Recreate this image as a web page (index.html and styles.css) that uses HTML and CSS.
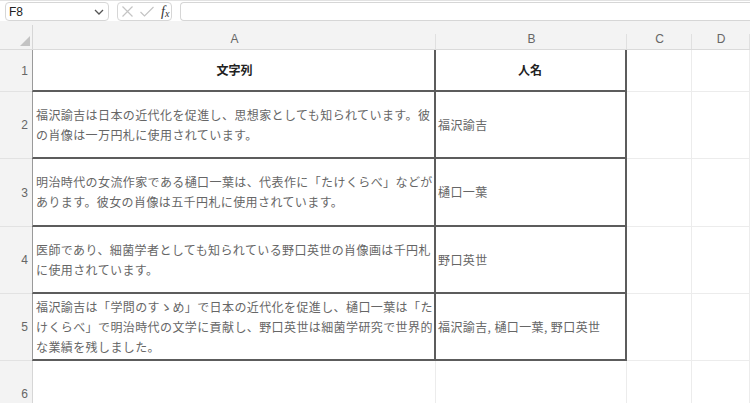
FILE: index.html
```html
<!DOCTYPE html>
<html lang="ja">
<head>
<meta charset="utf-8">
<link rel="stylesheet" href="styles.css">
</head>
<body>
<div class="app">
  <div class="toolbar">
    <div class="namebox"><span class="nb-text">F8</span>
      <svg class="chev" width="10" height="6" viewBox="0 0 10 6"><path d="M1 1 L5 5 L9 1" fill="none" stroke="#555" stroke-width="1.3"/></svg>
    </div>
    <div class="fxbox">
      <svg width="13" height="13" viewBox="0 0 13 13"><path d="M1.5 1.5 L11.5 11.5 M11.5 1.5 L1.5 11.5" stroke="#c4c4c4" stroke-width="1.2" fill="none"/></svg>
      <svg width="16" height="13" viewBox="0 0 16 13"><path d="M1.5 7 L5.5 11 L14.5 2" stroke="#c4c4c4" stroke-width="1.2" fill="none"/></svg>
      <span class="fx">f<sub>x</sub></span>
    </div>
    <div class="formula"></div>
  </div>
  <div class="sheet">
    <div class="corner"><span class="tri"></span></div>
    <div class="colh">A</div>
    <div class="colh">B</div>
    <div class="colh">C</div>
    <div class="colh">D</div>

    <div class="rowh">1</div>
    <div class="cell tA head">文字列</div>
    <div class="cell tB head">人名</div>
    <div class="cell"></div>
    <div class="cell"></div>

    <div class="rowh">2</div>
    <div class="cell tA">福沢諭吉は日本の近代化を促進し、思想家としても知られています。彼の肖像は一万円札に使用されています。</div>
    <div class="cell tB">福沢諭吉</div>
    <div class="cell"></div>
    <div class="cell"></div>

    <div class="rowh">3</div>
    <div class="cell tA">明治時代の女流作家である樋口一葉は、代表作に「たけくらべ」などがあります。彼女の肖像は五千円札に使用されています。</div>
    <div class="cell tB">樋口一葉</div>
    <div class="cell"></div>
    <div class="cell"></div>

    <div class="rowh">4</div>
    <div class="cell tA">医師であり、細菌学者としても知られている野口英世の肖像画は千円札に使用されています。</div>
    <div class="cell tB">野口英世</div>
    <div class="cell"></div>
    <div class="cell"></div>

    <div class="rowh">5</div>
    <div class="cell tA">福沢諭吉は「学問のすゝめ」で日本の近代化を促進し、樋口一葉は「たけくらべ」で明治時代の文学に貢献し、野口英世は細菌学研究で世界的な業績を残しました。</div>
    <div class="cell tB">福沢諭吉, 樋口一葉, 野口英世</div>
    <div class="cell"></div>
    <div class="cell"></div>

    <div class="rowh">6</div>
    <div class="cell"></div>
    <div class="cell"></div>
    <div class="cell"></div>
    <div class="cell"></div>
  </div>
</div>
</body>
</html>
```
FILE: styles.css
```css
* { box-sizing: border-box; }
html, body { margin: 0; padding: 0; background: #fff; }
body { font-family: "Noto Sans CJK JP", "Noto Sans", sans-serif; overflow: hidden; }
.app { width: 750px; height: 403px; overflow: hidden; }

.toolbar {
  height: 21px;
  border-top: 1px solid #e2e2e2;
  display: flex;
  align-items: flex-start;
  padding: 1px 0 0 5px;
  gap: 8px;
  background: #fff;
}
.namebox {
  width: 104px; height: 19px;
  border: 1px solid #d6d6d6; border-radius: 4px;
  display: flex; align-items: center; justify-content: space-between;
  padding: 0 4px 0 3px;
}
.nb-text { font-family: "Liberation Sans", Arial, sans-serif; font-size: 12px; color: #222; }
.fxbox {
  width: 55px; height: 19px;
  border: 1px solid #d6d6d6; border-radius: 4px;
  display: flex; align-items: center; gap: 5px; padding-left: 3px;
}
.fx { font-family: "Liberation Serif", serif; font-style: italic; font-size: 14px; color: #333; margin-left: 1px; line-height: 1; }
.fx sub { font-size: 10px; vertical-align: -1px; }
.formula { flex: 1; height: 19px; border: 1px solid #d6d6d6; border-radius: 4px 0 0 4px; border-right: none; }

.sheet {
  display: grid;
  grid-template-columns: 33px 403px 191px 65px 58px;
  grid-template-rows: 29px 42px 67px 68px 67px 67px 67px;
}
.corner {
  background: #f3f3f3;
  border-bottom: 1px solid #dadada;
  position: relative;
}
.corner::after {
  content: ""; position: absolute; right: 0; top: 4px; bottom: 0; width: 1px; background: #d6d6d6;
}
.tri {
  position: absolute; right: 3px; bottom: 3px;
  width: 0; height: 0;
  border-left: 10px solid transparent;
  border-bottom: 10px solid #c3c3c3;
}
.colh {
  background: #f3f3f3;
  border-bottom: 1px solid #dadada;
  position: relative;
  font-family: "Liberation Sans", Arial, sans-serif;
  font-size: 12px; color: #666;
  display: flex; align-items: flex-end; justify-content: center;
  padding-bottom: 3px;
}
.colh::after {
  content: ""; position: absolute; right: 0; top: 13px; bottom: 0; width: 1px; background: #e0e0e0;
}
.rowh {
  background: #f3f3f3;
  border-right: 1px solid #d6d6d6;
  border-bottom: 1px solid #e2e2e2;
  font-family: "Liberation Sans", Arial, sans-serif;
  font-size: 12px; color: #666;
  display: flex; align-items: center; justify-content: flex-end;
  padding-right: 4px;
}
.cell {
  border-right: 1px solid #ececec;
  border-bottom: 1px solid #ececec;
  font-size: 12px;
  line-height: 20px;
  color: #666;
  display: flex; align-items: center;
  padding: 0 3px;
}
.tA { border-right: 2px solid #5c5c5c; border-bottom: 2px solid #5c5c5c; border-left: 1px solid #9a9a9a; margin-left: -1px; padding-left: 3px; padding-right: 1px; letter-spacing: 0.4px; }
.tB { border-right: 2px solid #5c5c5c; border-bottom: 2px solid #5c5c5c; padding-left: 2px; letter-spacing: 0.4px; }
.head { justify-content: center; font-weight: bold; color: #222; letter-spacing: 0; }
```
